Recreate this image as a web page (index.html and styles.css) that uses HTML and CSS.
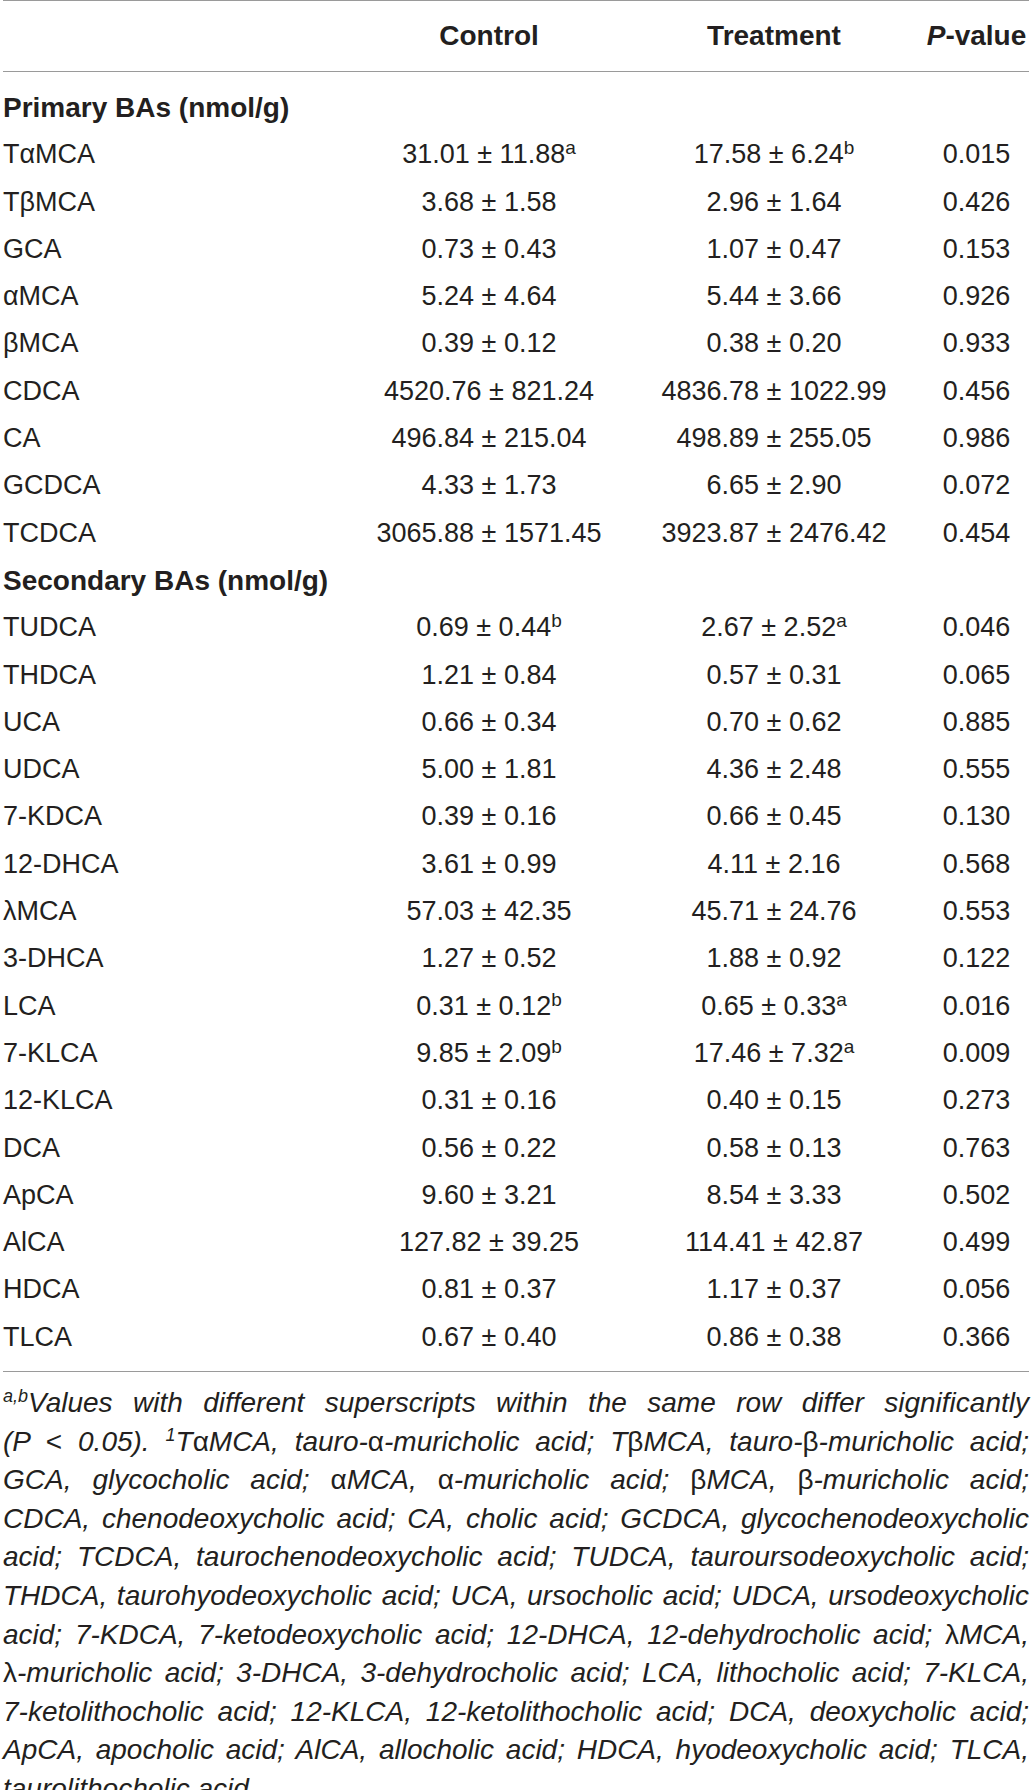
FILE: index.html
```html
<!DOCTYPE html>
<html lang="en">
<head>
<meta charset="utf-8">
<title>Bile acids table</title>
<link rel="stylesheet" href="styles.css">
</head>
<body>
<div class="page">
<table class="ba-table">
  <colgroup>
    <col class="c-label">
    <col class="c-ctrl">
    <col class="c-trt">
    <col class="c-p">
  </colgroup>
  <thead>
    <tr>
      <th></th>
      <th>Control</th>
      <th>Treatment</th>
      <th><i>P</i>-value</th>
    </tr>
  </thead>
  <tbody>
    <tr class="group first"><td colspan="4">Primary BAs (nmol/g)</td></tr>
    <tr><td>TαMCA</td><td>31.01 ± 11.88<sup>a</sup></td><td>17.58 ± 6.24<sup>b</sup></td><td>0.015</td></tr>
    <tr><td>TβMCA</td><td>3.68 ± 1.58</td><td>2.96 ± 1.64</td><td>0.426</td></tr>
    <tr><td>GCA</td><td>0.73 ± 0.43</td><td>1.07 ± 0.47</td><td>0.153</td></tr>
    <tr><td>αMCA</td><td>5.24 ± 4.64</td><td>5.44 ± 3.66</td><td>0.926</td></tr>
    <tr><td>βMCA</td><td>0.39 ± 0.12</td><td>0.38 ± 0.20</td><td>0.933</td></tr>
    <tr><td>CDCA</td><td>4520.76 ± 821.24</td><td>4836.78 ± 1022.99</td><td>0.456</td></tr>
    <tr><td>CA</td><td>496.84 ± 215.04</td><td>498.89 ± 255.05</td><td>0.986</td></tr>
    <tr><td>GCDCA</td><td>4.33 ± 1.73</td><td>6.65 ± 2.90</td><td>0.072</td></tr>
    <tr><td>TCDCA</td><td>3065.88 ± 1571.45</td><td>3923.87 ± 2476.42</td><td>0.454</td></tr>
    <tr class="group"><td colspan="4">Secondary BAs (nmol/g)</td></tr>
    <tr><td>TUDCA</td><td>0.69 ± 0.44<sup>b</sup></td><td>2.67 ± 2.52<sup>a</sup></td><td>0.046</td></tr>
    <tr><td>THDCA</td><td>1.21 ± 0.84</td><td>0.57 ± 0.31</td><td>0.065</td></tr>
    <tr><td>UCA</td><td>0.66 ± 0.34</td><td>0.70 ± 0.62</td><td>0.885</td></tr>
    <tr><td>UDCA</td><td>5.00 ± 1.81</td><td>4.36 ± 2.48</td><td>0.555</td></tr>
    <tr><td>7-KDCA</td><td>0.39 ± 0.16</td><td>0.66 ± 0.45</td><td>0.130</td></tr>
    <tr><td>12-DHCA</td><td>3.61 ± 0.99</td><td>4.11 ± 2.16</td><td>0.568</td></tr>
    <tr><td>λMCA</td><td>57.03 ± 42.35</td><td>45.71 ± 24.76</td><td>0.553</td></tr>
    <tr><td>3-DHCA</td><td>1.27 ± 0.52</td><td>1.88 ± 0.92</td><td>0.122</td></tr>
    <tr><td>LCA</td><td>0.31 ± 0.12<sup>b</sup></td><td>0.65 ± 0.33<sup>a</sup></td><td>0.016</td></tr>
    <tr><td>7-KLCA</td><td>9.85 ± 2.09<sup>b</sup></td><td>17.46 ± 7.32<sup>a</sup></td><td>0.009</td></tr>
    <tr><td>12-KLCA</td><td>0.31 ± 0.16</td><td>0.40 ± 0.15</td><td>0.273</td></tr>
    <tr><td>DCA</td><td>0.56 ± 0.22</td><td>0.58 ± 0.13</td><td>0.763</td></tr>
    <tr><td>ApCA</td><td>9.60 ± 3.21</td><td>8.54 ± 3.33</td><td>0.502</td></tr>
    <tr><td>AlCA</td><td>127.82 ± 39.25</td><td>114.41 ± 42.87</td><td>0.499</td></tr>
    <tr><td>HDCA</td><td>0.81 ± 0.37</td><td>1.17 ± 0.37</td><td>0.056</td></tr>
    <tr class="last"><td>TLCA</td><td>0.67 ± 0.40</td><td>0.86 ± 0.38</td><td>0.366</td></tr>
  </tbody>
</table>
<div class="foot">
  <span class="ln"><sup>a,b</sup>Values with different superscripts within the same row differ significantly</span>
  <span class="ln">(P <span class="up">&lt;</span> 0.05). <sup>1</sup>T<span class="up">α</span>MCA, tauro-<span class="up">α</span>-muricholic acid; T<span class="up">β</span>MCA, tauro-<span class="up">β</span>-muricholic acid;</span>
  <span class="ln">GCA, glycocholic acid; <span class="up">α</span>MCA, <span class="up">α</span>-muricholic acid; <span class="up">β</span>MCA, <span class="up">β</span>-muricholic acid;</span>
  <span class="ln">CDCA, chenodeoxycholic acid; CA, cholic acid; GCDCA, glycochenodeoxycholic</span>
  <span class="ln">acid; TCDCA, taurochenodeoxycholic acid; TUDCA, tauroursodeoxycholic acid;</span>
  <span class="ln">THDCA, taurohyodeoxycholic acid; UCA, ursocholic acid; UDCA, ursodeoxycholic</span>
  <span class="ln">acid; 7-KDCA, 7-ketodeoxycholic acid; 12-DHCA, 12-dehydrocholic acid; <span class="up">λ</span>MCA,</span>
  <span class="ln"><span class="up">λ</span>-muricholic acid; 3-DHCA, 3-dehydrocholic acid; LCA, lithocholic acid; 7-KLCA,</span>
  <span class="ln">7-ketolithocholic acid; 12-KLCA, 12-ketolithocholic acid; DCA, deoxycholic acid;</span>
  <span class="ln">ApCA, apocholic acid; AlCA, allocholic acid; HDCA, hyodeoxycholic acid; TLCA,</span>
  <span class="ln end">taurolithocholic acid.</span>
</div>
</div>
</body>
</html>
```
FILE: styles.css
```css
html, body {
  margin: 0;
  padding: 0;
  background: #ffffff;
}

.page {
  width: 1031px;
  padding: 0 2px 0 3px;
  box-sizing: border-box;
  font-family: "Liberation Sans", Arial, sans-serif;
  color: #231f20;
}

.ba-table {
  width: 100%;
  border-collapse: collapse;
  border-top: 1px solid #9a9a9a;
  border-bottom: 1px solid #9a9a9a;
  font-size: 27px;
}

.c-label { width: 351px; }
.c-ctrl { width: 270px; }
.c-trt { width: 300px; }
.c-p { width: 105px; }

.ba-table th {
  height: 70px;
  padding: 0;
  font-size: 28px;
  font-weight: bold;
  text-align: center;
  border-bottom: 1px solid #9a9a9a;
  vertical-align: middle;
}

.ba-table td {
  height: 47.3px;
  line-height: 47.3px;
  padding: 0;
  text-align: center;
  white-space: nowrap;
  vertical-align: middle;
}

.ba-table td:first-child {
  text-align: left;
}

.ba-table tr.group td {
  font-weight: bold;
  font-size: 28px;
}

.ba-table tr.first td {
  padding-top: 12px;
}

.ba-table tr.last td {
  padding-bottom: 10px;
}

.ba-table sup {
  font-size: 19px;
  line-height: 0;
  vertical-align: 9px;
}

.foot {
  padding-top: 12px;
  font-size: 28px;
  font-style: italic;
  line-height: 38.6px;
}

.foot .ln {
  display: block;
  white-space: nowrap;
  text-align: justify;
  text-align-last: justify;
}

.foot .ln.end {
  text-align-last: left;
}

.foot sup {
  font-size: 18px;
  line-height: 0;
  vertical-align: 10px;
}

.foot .up {
  font-style: normal;
}
```
